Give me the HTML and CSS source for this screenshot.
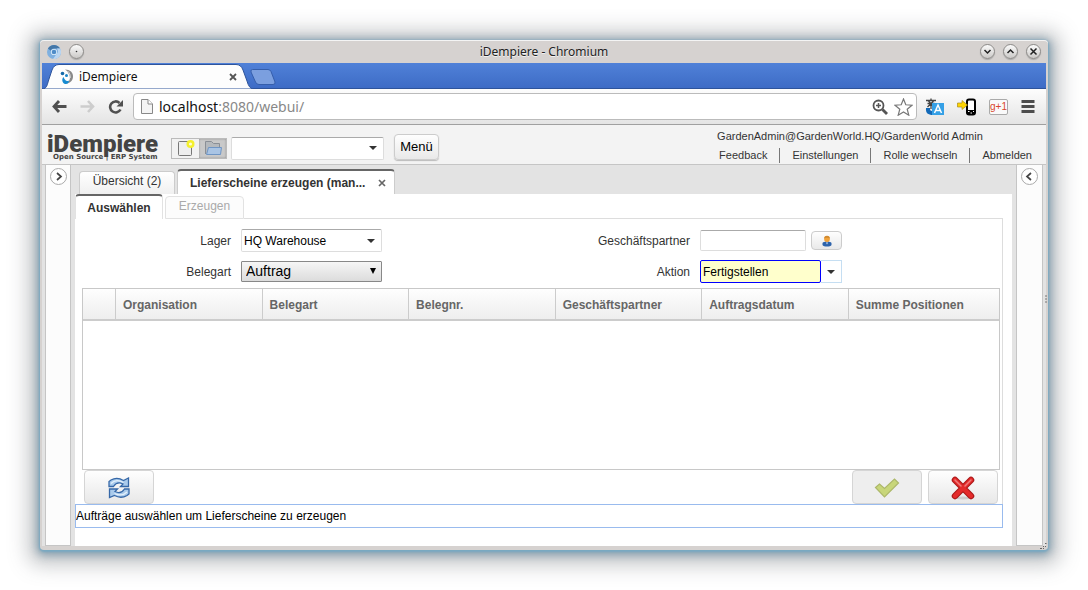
FILE: index.html
```html
<!DOCTYPE html>
<html lang="de">
<head>
<meta charset="utf-8">
<title>iDempiere</title>
<link rel="stylesheet" href="styles.css">
</head>
<body>
<div class="window">
  <header class="titlebar">
    <div class="title-side">
      <svg width="14" height="14" viewBox="0 0 14 14"><circle cx="7" cy="7" r="7" fill="#7fb0e0"/><path d="M.9 3.600A7 7 0 0 1 13.100 3.600H7a3.400 3.400 0 0 0-3.200 2.200z" fill="#4477a8"/><path d="M13.100 3.600A7 7 0 0 1 6 14l3.800-5.200a3.400 3.400 0 0 0 0-5.200z" fill="#b9d5f1"/><circle cx="7" cy="7" r="3.100" fill="#e0effb"/><circle cx="7" cy="7" r="2.300" fill="#4f8cc8"/></svg>
      <button class="round" aria-label="Anheften"><svg width="13" height="13" viewBox="0 0 13 13"><circle cx="6.500" cy="6.500" r=".8" fill="#333"/></svg></button>
    </div>
    <div class="title-text">iDempiere - Chromium</div>
    <div class="title-side title-end">
      <button class="round" aria-label="Minimieren"><svg width="13" height="13" viewBox="0 0 13 13"><path d="M3.500 5l3 3 3-3" class="glyph"/></svg></button>
      <button class="round" aria-label="Maximieren"><svg width="13" height="13" viewBox="0 0 13 13"><path d="M3.500 8l3-3 3 3" class="glyph"/></svg></button>
      <button class="round" aria-label="Schließen"><svg width="13" height="13" viewBox="0 0 13 13"><path d="M3.500 3.500l6 6M9.500 3.500l-6 6" class="glyph"/></svg></button>
    </div>
  </header>

  <div class="tabstrip">
    <div class="browser-tab">
      <svg class="tab-shape" width="211" height="25" viewBox="0 0 211 25"><path d="M0 25C5 25 5 21 7 15L10 6Q12 .5 17 .5H194Q199 .5 201 6L205 17Q207 24.500 211 25z" fill="#fdfdfd" stroke="#2e549b"/></svg>
      <svg class="favicon" width="14" height="16" viewBox="0 0 14 16"><path d="M5 .5c5 0 8.500 3 8 7.500C12.500 12 10 14 7 14.500 9.500 12 10.500 9.500 9.700 7 9 4.500 7.500 2 5 .5z" fill="#8a8a8a"/><path d="M7.500 2c2 1.500 3 4 2.700 7" fill="none" stroke="#ddd"/><circle cx="2.500" cy="4.500" r="1.800" fill="#176aa8"/><circle cx="6.500" cy="6.500" r="1.500" fill="#1b84c5"/><path d="M3.500 8c-2 2-1.500 6 1.500 7 2.500.5 4-1 4-3.500C6.500 13 4.500 11 3.500 8z" fill="#168ad0"/></svg>
      <span class="browser-tab-title">iDempiere</span>
      <button class="plain" aria-label="Tab schließen"><svg width="8" height="8" viewBox="0 0 8 8"><path d="M1 1l6 6M7 1L1 7" stroke="#555" stroke-width="1.800"/></svg></button>
    </div>
    <button class="plain new-tab" aria-label="Neuer Tab"><svg width="26" height="16" viewBox="0 0 26 16"><path d="M2.500.5H18Q20 .5 21 2.500L25 13Q25.500 15.500 23 15.500H9Q6.500 15.500 5.500 13L1 3Q.5.5 2.500.5z" fill="#7b9fdf" stroke="#355eab"/></svg></button>
  </div>

  <nav class="toolbar">
    <button class="plain" aria-label="Zurück"><svg width="15" height="13" viewBox="0 0 15 13"><path d="M7 1L2 6.500 7 12M2 6.500H14.500" fill="none" stroke="#505050" stroke-width="2.800"/></svg></button>
    <button class="plain" aria-label="Vor"><svg width="15" height="13" viewBox="0 0 15 13"><path d="M8 1l5 5.500L8 12M13 6.500H.5" fill="none" stroke="#cdcdcd" stroke-width="2.600"/></svg></button>
    <button class="plain" aria-label="Neu laden"><svg width="16" height="14" viewBox="0 0 16 14"><path d="M12.500 9.500A5.500 5.500 0 1 1 11.500 3" fill="none" stroke="#505050" stroke-width="2.600"/><path d="M15 0v6.500H8.500z" fill="#505050"/></svg></button>
    <div class="address">
      <svg width="12" height="15" viewBox="0 0 12 15"><path d="M.5.5h6.500l4.500 4.500v9.500H.5z" fill="#f4f4f4" stroke="#888"/><path d="M7 .5V5h4.500" fill="#fff" stroke="#888"/></svg>
      <a class="url" href="#">localhost<span class="url-rest">:8080/webui/</span></a>
      <svg width="16" height="16" viewBox="0 0 16 16"><circle cx="6.500" cy="6.500" r="5" fill="none" stroke="#555" stroke-width="1.800"/><path d="M4 6.500h5M6.500 4v5" stroke="#555" stroke-width="1.500"/><path d="M10.500 10.500l4.500 4.500" stroke="#555" stroke-width="2.800"/></svg>
      <svg width="19" height="18" viewBox="0 0 19 18"><path d="M9.500 1l2.300 5.800 6.200.4-4.800 4 1.600 6-5.300-3.300-5.300 3.300 1.600-6L1 7.200l6.200-.4z" fill="#fff" stroke="#777" stroke-width="1.200"/></svg>
    </div>
    <button class="plain" aria-label="Übersetzen"><svg width="19" height="18" viewBox="0 0 19 18"><path d="M1 2.500h10M6 .5v2M2.500 5.500h7M3.500 3l5 5.500M8.500 3l-6 6M6 6v5" stroke="#444" stroke-width="1.300" fill="none"/><path d="M1 10c-.5 5 2 7 7 7v-4c-3 0-3-1-3-3z" fill="#1269b8"/><rect x="7" y="5" width="12" height="12" fill="#35a0e6"/><path d="M9.500 15L13 7l3.500 8M11 12.500h4" fill="none" stroke="#fff" stroke-width="1.500"/></svg></button>
    <button class="plain" aria-label="An Telefon senden"><svg width="19" height="18" viewBox="0 0 19 18"><rect x="10" y="1.500" width="8" height="15" rx="2" fill="#fff" stroke="#000" stroke-width="2"/><path d="M9 12h9v4H10z" fill="#000"/><path d="M11 13.500h1.500M13.500 15H15M16 13.500h1" stroke="#fff"/><path d="M.5 5H5V2.500L10.500 7 5 11.500V9H.5z" fill="#ffd500" stroke="#a98c20" stroke-width=".7"/></svg></button>
    <button class="plus-one">g+1</button>
    <button class="plain" aria-label="Menü"><svg width="14" height="13" viewBox="0 0 14 13"><path d="M.5 1.500h13M.5 6.500h13M.5 11.500h13" stroke="#4d4d4d" stroke-width="3"/></svg></button>
  </nav>

  <div class="app-header">
    <div class="logo"><span class="logo-name">iDempiere</span><span class="logo-sub">Open Source | ERP System</span></div>
    <div class="mode">
      <button class="mode-btn" aria-label="Neu"><svg width="18" height="18" viewBox="0 0 18 18"><rect x="1.500" y="2.500" width="13" height="14" rx="1" fill="#eee" stroke="#777"/><circle cx="13.500" cy="5" r="4" fill="#f4f02c"/><circle cx="13.500" cy="5" r="1.600" fill="#fffbd5"/></svg></button>
      <button class="mode-btn mode-on" aria-label="Öffnen"><svg width="18" height="16" viewBox="0 0 18 16"><path d="M1.500 14V1.500h6l2 2h6V8" fill="#b5b9bd" stroke="#8a8f96"/><path d="M4.500 7.500h13L16.500 14.500H2.500z" fill="#a9c4e4" stroke="#6f95c4"/></svg></button>
    </div>
    <div class="combo search-combo"><input class="combo-input" aria-label="Suche"><button class="arrow" aria-label="Öffnen"></button></div>
    <button class="menu-btn">Menü</button>
    <div class="account">
      <div class="user">GardenAdmin@GardenWorld.HQ/GardenWorld Admin</div>
      <div class="links"><a href="#">Feedback</a><a href="#">Einstellungen</a><a href="#">Rolle wechseln</a><a href="#">Abmelden</a></div>
    </div>
  </div>

  <div class="workspace">
    <aside class="rail"><button class="collapse" aria-label="Ausklappen"><svg width="15" height="15" viewBox="0 0 15 15"><path d="M6 4l4 3.500L6 11" class="chev"/></svg></button></aside>
    <main class="content">
      <div class="tabs">
        <button class="tab">Übersicht (2)</button>
        <div class="tab tab-active"><span>Lieferscheine erzeugen (man...</span><button class="plain" aria-label="Schließen"><svg width="8" height="8" viewBox="0 0 8 8"><path d="M1 1l6 6M7 1L1 7" stroke="#666" stroke-width="1.700"/></svg></button></div>
      </div>
      <div class="sheet">
        <div class="subtabs">
          <button class="subtab subtab-active">Auswählen</button>
          <button class="subtab" disabled>Erzeugen</button>
        </div>
        <section class="panel">
          <form class="form">
            <label for="lager">Lager</label>
            <div class="combo"><input class="combo-input" id="lager" value="HQ Warehouse"><button type="button" class="arrow" aria-label="Öffnen"></button></div>
            <label for="partner">Geschäftspartner</label>
            <div class="partner"><input class="text-input" id="partner"><button type="button" class="person" aria-label="Suchen"><svg width="12" height="12" viewBox="0 0 12 12"><path d="M1.500 8c1-2 8-2 9 0v2c-1 2-8 2-9 0z" fill="#2d63ab"/><path d="M5 7.500h2L6 9.500z" fill="#dce8f5"/><circle cx="6" cy="4" r="2.900" fill="#f2a33a"/><path d="M3.200 3.500a2.800 2.800 0 0 1 5.600 0C7 2.500 5 2.500 3.200 3.500z" fill="#d08a30"/></svg></button></div>
            <label for="belegart">Belegart</label>
            <div class="select-wrap"><select id="belegart" class="select"><option>Auftrag</option></select></div>
            <label for="aktion">Aktion</label>
            <div class="combo combo-focus"><input class="combo-input" id="aktion" value="Fertigstellen"><button type="button" class="arrow" aria-label="Öffnen"></button></div>
          </form>
          <div class="grid">
            <table class="table">
              <colgroup><col class="col-check"><col class="col-data" span="5"><col></colgroup>
              <thead><tr><th></th><th>Organisation</th><th>Belegart</th><th>Belegnr.</th><th>Geschäftspartner</th><th>Auftragsdatum</th><th>Summe Positionen</th></tr></thead>
            </table>
          </div>
          <div class="actions">
            <button class="action" aria-label="Aktualisieren"><svg width="22" height="22" viewBox="0 0 22 22"><path d="M1 9.500V4.500L3 3Q9-.5 15.500 3.500L20.500 1V9.500H12.500L15 7Q9 4 5.500 9.500z" fill="#a9caeb" stroke="#3668a8" stroke-width="1.300"/><path d="M21 12v5L19 18.500Q13 22 6.500 18.500L1.500 20.500V12H9.500L7 14.500Q13 17.500 16.500 12z" fill="#a9caeb" stroke="#3668a8" stroke-width="1.300"/><path d="M3 6.500Q8 1.500 15.500 5.500M19 15Q14 20 6.500 16.500" fill="none" stroke="#e3f0fb" stroke-width="1.200"/></svg></button>
            <span class="spacer"></span>
            <button class="action action-off" disabled aria-label="OK"><svg width="26" height="20" viewBox="0 0 26 20"><path d="M1.500 9.500L5.500 6l5 4.500L20.500 1 24.500 5 10.500 19z" fill="#c8d67a" stroke="#adb86a" stroke-width="1.200"/></svg></button>
            <button class="action" aria-label="Abbrechen"><svg width="24" height="24" viewBox="0 0 24 24"><ellipse cx="12" cy="22" rx="8" ry="1.500" fill="#ccc"/><path d="M4 4l16 16M20 4L4 20" stroke="#a91717" stroke-width="6.500" stroke-linecap="round"/><path d="M4 4l16 16M20 4L4 20" stroke="#e42b2b" stroke-width="4.500" stroke-linecap="round"/><path d="M4 4l6 6M20 4l-6 6" stroke="#f07c7c" stroke-width="1.500" stroke-linecap="round"/></svg></button>
          </div>
        </section>
        <div class="status">Aufträge auswählen um Lieferscheine zu erzeugen</div>
      </div>
    </main>
    <aside class="rail rail-right"><button class="collapse" aria-label="Ausklappen"><svg width="15" height="15" viewBox="0 0 15 15"><path d="M9 4L5 7.500 9 11" class="chev"/></svg></button></aside>
  </div>
  <svg class="edge-grip" width="3" height="9" viewBox="0 0 3 9"><path d="M0 1h2M0 4h2M0 7h2" stroke="#777"/></svg>
  <svg class="corner-grip" width="7" height="6" viewBox="0 0 7 6"><path d="M5 .5h1.500M3 3.500h1M5 3.500h1M0 5.500h2M3 5.500h1" stroke="#666"/></svg>
</div>
</body>
</html>
```
FILE: styles.css
```css
* { box-sizing: border-box; }

body {
  margin: 0;
  padding: 40px;
  min-height: 100vh;
  display: flex;
  background: #fff;
  font: 12px/16px "Liberation Sans", Arial, sans-serif;
  color: #333;
}

button, input, select { font: inherit; color: inherit; margin: 0; }
button { padding: 0; }
svg { display: block; }

.window {
  position: relative;
  flex: 1;
  min-width: 0;
  display: flex;
  flex-direction: column;
  padding: 0 2px 4px;
  border-radius: 4px;
  background: #d6d2d0;
  box-shadow: inset 0 1px #f4f4f4, 0 1px 2px 1px #79a9c2, 0 2px 8px 3px rgba(90, 130, 155, .6), 0 3px 20px 12px rgba(90, 95, 100, .35);
}
.edge-grip { position: absolute; right: 0; top: 50%; }
.corner-grip { position: absolute; right: 1px; bottom: 1px; }

.plain { border: 0; background: none; flex: none; }

/* Window frame */
.titlebar { height: 23px; display: flex; align-items: center; padding: 0 5px; }
.title-side { width: 100px; display: flex; align-items: center; gap: 8px; }
.title-end { justify-content: flex-end; }
.title-text { flex: 1; text-align: center; font: 12px/20px "Noto Sans", sans-serif; color: #222; text-shadow: 0 1px #f2f2f2; }
.round {
  width: 15px;
  height: 15px;
  border: 1px solid #8c8a88;
  border-radius: 50%;
  background: linear-gradient(#fbfbfb, #cbc9c7);
  box-shadow: 0 1px 1px #aaa;
}
.glyph { fill: none; stroke: #222; stroke-width: 1.500; }

.tabstrip {
  height: 26px;
  display: flex;
  align-items: flex-end;
  background: linear-gradient(#5081d8, #3d6bc5);
  box-shadow: inset 0 -1px #2e549b;
}
.browser-tab { position: relative; width: 208px; height: 24px; display: flex; align-items: center; padding: 0 13px 0 18px; }
.tab-shape { position: absolute; left: 0; bottom: 0; }
.browser-tab > :not(.tab-shape) { position: relative; }
.browser-tab-title { flex: 1; padding-left: 5px; font: 12px/18px "Noto Sans", sans-serif; color: #111; }
.new-tab { padding: 0 0 4px; }

.toolbar {
  height: 36px;
  display: flex;
  align-items: center;
  gap: 13px;
  padding: 0 11px 0 10px;
  background: linear-gradient(#fdfdfd, #e4e4e4);
  border-bottom: 1px solid #a0a0a0;
}
.address {
  flex: 1;
  height: 27px;
  display: flex;
  align-items: center;
  gap: 6px;
  margin-left: -4px;
  margin-right: -5px;
  padding: 0 3px 0 7px;
  border: 1px solid #bbb;
  border-radius: 4px;
  background: #fff;
}
.url { flex: 1; font: 14px/20px "Noto Sans", sans-serif; color: #111; text-decoration: none; }
.url-rest { color: #888; }
.plus-one {
  width: 19px;
  height: 16px;
  border: 1px solid #aaa;
  border-radius: 2px;
  background: #fafafa;
  color: #d9472f;
  font: 10px/12px "Liberation Sans", sans-serif;
}

/* Application header */
.app-header {
  height: 40px;
  display: flex;
  align-items: center;
  padding: 0 14px 0 5px;
  background: #f3f3f3;
  border-bottom: 1px solid #c5c5c5;
}
.logo { width: 124px; padding-top: 5px; display: flex; flex-direction: column; color: #444; }
.logo-name { font: 900 24px/20px Roboto, sans-serif; }
.logo-sub { padding-left: 6px; font: bold 7px/6px "DejaVu Sans", sans-serif; white-space: nowrap; }
.mode { display: flex; margin-top: 7px; border: 1px solid #bbb; }
.mode-btn { width: 27px; height: 19px; display: grid; place-items: center; border: 0; background: #f2f2f2; }
.mode-on { background: #c9c9c9; box-shadow: inset 0 0 2px #888; }
.combo { display: flex; height: 23px; border: 1px solid #ddd; border-top-color: #aaa; border-radius: 2px; background: #fff; }
.combo-input { flex: 1; min-width: 0; border: 0; padding: 0 2px; background: none; color: #000; outline: 0; }
.arrow { width: 20px; border: 0; background: none; display: grid; place-items: center; }
.arrow::before { content: ""; border: 4px solid transparent; border-top-color: #333; border-bottom: 0; }
.search-combo { width: 153px; margin: 7px 10px 0 4px; }
.menu-btn {
  width: 45px;
  height: 26px;
  margin-top: 5px;
  border: 1px solid #ccc;
  border-radius: 4px;
  background: linear-gradient(#fefefe, #e9e9e9);
  box-shadow: 0 1px 1px #bbb;
  color: #000;
  font-size: 13px;
}
.account { margin-left: auto; font-size: 11px; line-height: 20px; }
.user { padding-bottom: 3px; line-height: 18px; }
.links { display: flex; align-items: center; margin-left: 2px; }
.links a { padding: 0 12px; line-height: 15px; color: inherit; text-decoration: none; border-left: 1px solid #777; }
.links a:first-child { padding-left: 0; border: 0; }
.links a:last-child { padding-right: 0; }

/* Workspace */
.workspace { flex: 1; display: flex; gap: 4px; padding: 0 3px; background: #e3e3e3; }
.rail { width: 26px; flex: none; border: 1px solid #c5c5c5; border-top: 0; background: #fcfcfc; padding-top: 3px; }
.rail-right { width: 27px; }
.collapse { width: 17px; height: 17px; display: grid; place-items: center; margin: 0 auto; border: 1px solid #aaa; border-radius: 50%; background: #fff; }
.chev { fill: none; stroke: #444; stroke-width: 1.700; }
.content { flex: 1; min-width: 0; display: flex; flex-direction: column; }

.tabs { height: 29px; display: flex; align-items: flex-end; gap: 2px; padding-left: 4px; }
.tab {
  height: 23px;
  width: 96px;
  padding-bottom: 4px;
  border: 1px solid #ccc;
  border-bottom: 0;
  border-radius: 4px 4px 0 0;
  background: linear-gradient(#fff, #f0f0f0);
  white-space: nowrap;
}
.tab-active {
  width: 218px;
  height: 25px;
  display: flex;
  align-items: center;
  justify-content: space-between;
  padding: 1px 8px 0 12px;
  border-top: 2px solid #666;
  background: #fff;
  font-weight: bold;
}

.sheet { flex: 1; display: flex; flex-direction: column; padding: 0 9px 18px 0; background: #fff; }
.subtabs { height: 25px; display: flex; align-items: flex-end; gap: 2px; }
.subtab {
  height: 23px;
  width: 79px;
  border: 1px solid #e2e2e2;
  border-radius: 4px 4px 0 0;
  background: #fcfcfc;
  color: #aaa;
  padding-bottom: 3px;
}
.subtab-active {
  width: 88px;
  height: 25px;
  border-top: 2px solid #666;
  border-bottom: 0;
  background: #fff;
  color: #333;
  font-weight: bold;
  padding: 1px 0 0;
}
.subtabs::after { content: ""; flex: 1; margin-left: -2px; border-bottom: 1px solid #ddd; }

.panel { flex: 1; display: flex; flex-direction: column; padding: 10px 2px 0 7px; border-right: 1px solid #ddd; }
.form {
  display: grid;
  grid-template-columns: minmax(0, 149fr) 141px minmax(0, 298fr) 142px minmax(0, 148fr);
  column-gap: 10px;
  row-gap: 8px;
  align-items: center;
  padding-bottom: 5px;
}
.form label { text-align: right; }
.form label:nth-of-type(odd) { grid-column: 1; }
.form label:nth-of-type(even) { grid-column: 3; }
.text-input { width: 106px; height: 21px; border: 1px solid #ddd; border-top-color: #aaa; border-radius: 2px; background: #fff; }
.partner { display: flex; align-items: center; gap: 5px; }
.person {
  width: 31px;
  height: 19px;
  display: grid;
  place-items: center;
  border: 1px solid #ccc;
  border-radius: 4px;
  background: linear-gradient(#fefefe, #e9e9e9);
}
.select-wrap { position: relative; }
.select-wrap::after { content: ""; position: absolute; right: 6px; top: 7px; border: 3px solid transparent; border-top: 6px solid #000; border-bottom: 0; }
.select {
  display: block;
  appearance: none;
  width: 100%;
  height: 21px;
  padding: 0 4px;
  border: 1px solid #888;
  border-radius: 1px;
  background: linear-gradient(#f6f6f6, #dcdcdc);
  color: #000;
  font-size: 14px;
  line-height: 19px;
}
.combo-focus { border: 0; }
.combo-focus .combo-input { border: 1px solid #00f; background: #ffffcc; border-radius: 2px; }
.combo-focus .arrow { width: 21px; border: 1px solid #c5def2; border-left: 0; }

.grid { flex: 1; border: 1px solid #c8c8c8; background: #fff; }
.table { width: 100%; table-layout: fixed; border-collapse: separate; border-spacing: 0; }
.col-check { width: 32px; }
.col-data { width: 16%; }
.table th {
  height: 32px;
  padding: 1px 0 0 7px;
  text-align: left;
  color: #666;
  border-left: 1px solid #ccc;
  border-bottom: 2px solid #ccc;
  background: linear-gradient(#fefefe, #eee);
  white-space: nowrap;
}
.table th:first-child { border-left: 0; }

.actions { display: flex; gap: 6px; padding: 0 2px; }
.spacer { flex: 1; }
.action {
  width: 70px;
  height: 34px;
  padding-top: 2px;
  display: grid;
  place-items: center;
  border: 1px solid #d5d5d5;
  border-radius: 4px;
  background: linear-gradient(#fefefe, #e8e8e8);
}
.action-off { background: #eee; }
.status { height: 24px; border: 1px solid #99bbee; color: #000; line-height: 22px; }
```
